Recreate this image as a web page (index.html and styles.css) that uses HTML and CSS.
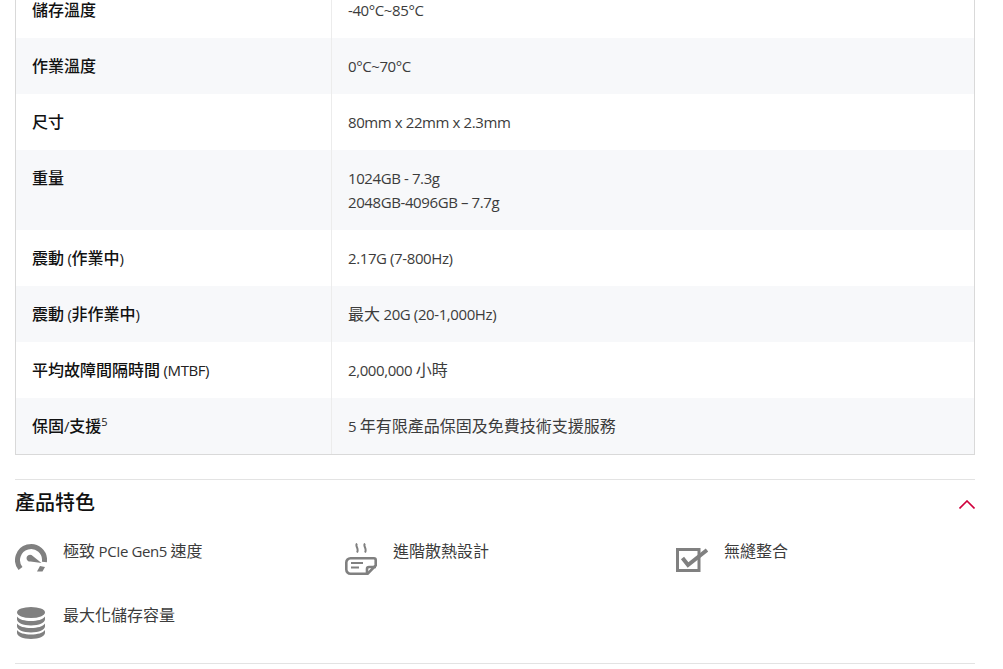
FILE: index.html
```html
<!DOCTYPE html>
<html lang="zh-Hant">
<head>
<meta charset="utf-8">
<title>產品規格</title>
<link rel="stylesheet" href="styles.css">
</head>
<body>
<main class="page">
  <section class="spec">
    <div class="row"><div class="key"><b>儲存溫度</b></div><div class="val">-40°C~85°C</div></div>
    <div class="row alt"><div class="key"><b>作業溫度</b></div><div class="val">0°C~70°C</div></div>
    <div class="row"><div class="key"><b>尺寸</b></div><div class="val">80mm x 22mm x 2.3mm</div></div>
    <div class="row alt"><div class="key"><b>重量</b></div><div class="val"><p>1024GB - 7.3g</p><p>2048GB-4096GB – 7.7g</p></div></div>
    <div class="row"><div class="key"><b>震動</b> (<b>作業中</b>)</div><div class="val">2.17G (7-800Hz)</div></div>
    <div class="row alt"><div class="key"><b>震動</b> (<b>非作業中</b>)</div><div class="val"><span class="c">最大</span> 20G (20-1,000Hz)</div></div>
    <div class="row"><div class="key"><b>平均故障間隔時間</b> (MTBF)</div><div class="val">2,000,000 <span class="c">小時</span></div></div>
    <div class="row alt"><div class="key"><b>保固</b>/<b>支援</b><sup>5</sup></div><div class="val">5 <span class="c">年有限產品保固及免費技術支援服務</span></div></div>
  </section>

  <section class="features">
    <header class="head">
      <h2>產品特色</h2>
      <svg class="chev" width="16" height="9" viewBox="0 0 16 9"><path d="M.5 8.500L8 1l7.500 7.500" fill="none" stroke="#d0003c" stroke-width="1.600"/></svg>
    </header>
    <div class="grid">
      <div class="item">
        <svg class="ico" width="32" height="32" viewBox="0 0 32 32"><path d="M5.500 25.500A13.500 13.500 0 1 1 29.400 19" fill="none" stroke="#808080" stroke-width="5"/><path d="M11.500 15a3.500 3.500 0 0 1 5-3l10 8-11-1.500a3.500 3.500 0 0 1-4-3.500z" fill="#808080"/><path d="M25 23l5 1-2.500 4.500H22z" fill="#808080"/></svg>
        <span class="txt"><span class="c">極致</span> PCIe Gen5 <span class="c">速度</span></span>
      </div>
      <div class="item">
        <svg class="ico" width="32" height="32" viewBox="0 0 32 32"><path d="M12 .5c-2.500 2.500 2.500 5 0 9M20 .5c-2.500 2.500 2.500 5 0 9" fill="none" stroke="#808080" stroke-width="2"/><path d="M5.500 15.300h23.500a1.700 1.700 0 0 1 1.700 1.700v5.500l-8 8.200H5.500a4.200 4.200 0 0 1-4.200-4.200v-7a4.200 4.200 0 0 1 4.200-4.200z" fill="none" stroke="#808080" stroke-width="2.600"/><path d="M6 20h12M6 24.500h8" stroke="#808080" stroke-width="2"/><path d="M22 31v-5a2 2 0 0 1 2-2h7" fill="none" stroke="#808080" stroke-width="2.600"/></svg>
        <span class="txt"><span class="c">進階散熱設計</span></span>
      </div>
      <div class="item">
        <svg class="ico" width="32" height="32" viewBox="0 0 32 32"><path d="M1.500 6.500h21.500v21H1.500z" fill="none" stroke="#808080" stroke-width="3"/><path d="M6.500 15l5.500 7L31 7" fill="none" stroke="#808080" stroke-width="4"/></svg>
        <span class="txt"><span class="c">無縫整合</span></span>
      </div>
      <div class="item">
        <svg class="ico" width="32" height="32" viewBox="0 0 32 32"><ellipse cx="16" cy="5.500" rx="14" ry="5.500" fill="#808080"/><path d="M2 9.500c2 3 7.500 4.500 14 4.500s12-1.500 14-4.500v3c0 3-6 6-14 6s-14-3-14-6z" fill="#808080"/><path d="M2 16.500c2 3 7.500 4.500 14 4.500s12-1.500 14-4.500v3c0 3-6 6-14 6s-14-3-14-6z" fill="#808080"/><path d="M2 23c2 3 7.500 4.500 14 4.500S28 26 30 23v3c0 3-6 6-14 6S2 29 2 26z" fill="#808080"/></svg>
        <span class="txt"><span class="c">最大化儲存容量</span></span>
      </div>
    </div>
  </section>
</main>
</body>
</html>
```
FILE: styles.css
```css
* { box-sizing: border-box; }
html, body { margin: 0; padding: 0; background: #fff; height: 669px; overflow: hidden; }
body { font-family: "Open Sans", "Noto Sans CJK TC", sans-serif; font-size: 15px; letter-spacing: -.4px; color: #333; }
.page { padding: 0 28px 0 15px; margin-top: -18px; }
.spec { border: solid #d9d9d9; border-width: 0 1px 1px; }
.row { display: grid; grid-template-columns: 315px 1fr; }
.alt { background: #f7f8fa; }
.key { padding: 16px; line-height: 24px; color: #222; }
.key b { font: 500 16px/16px "Noto Sans CJK TC", sans-serif; letter-spacing: 0; color: #111; }
.key sup { font-size: 11px; line-height: 0; vertical-align: 6px; }
.val { padding: 16px; line-height: 24px; border-left: 1px solid #ececec; color: #3c3c3c; }
.val p { margin: 0; }
.c { font: 400 16px/16px "Noto Sans CJK TC", sans-serif; letter-spacing: 0; }
.features { margin-top: 24px; border: solid #e3e3e3; border-width: 1px 0; }
.head { display: flex; justify-content: space-between; align-items: center; height: 46px; }
.head h2 { margin: 0 0 2px; font: 500 20px/30px "Noto Sans CJK TC", sans-serif; letter-spacing: 0; color: #111; }
.chev { display: block; margin-top: 2px; }
.grid { display: grid; grid-template-columns: 330px 331px 1fr; row-gap: 5px; padding: 13px 0 1px; }
.item { display: flex; gap: 16px; height: 59px; }
.ico { flex: none; margin-top: 4px; }
.txt { line-height: 24px; color: #3c3c3c; }
```
